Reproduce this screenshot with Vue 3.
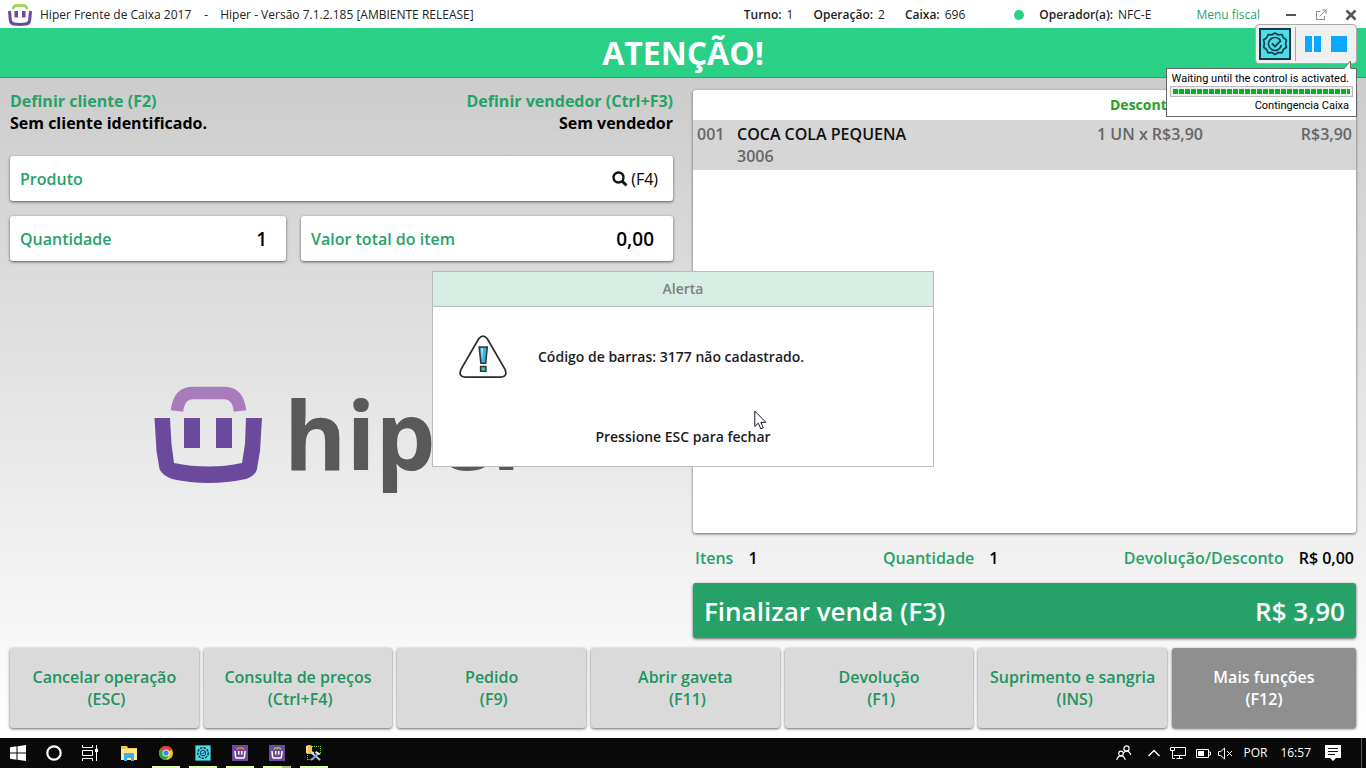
<script setup>
import { ref } from 'vue'

const quantity = ref('1')
const itemTotal = ref('0,00')
const product = ref('')

const status = [
  { label: 'Turno:', value: '1' },
  { label: 'Operação:', value: '2' },
  { label: 'Caixa:', value: '696' },
]

const items = [
  { seq: '001', name: 'COCA COLA PEQUENA', code: '3006', amount: '1 UN x R$3,90', total: 'R$3,90' },
]

const totals = [
  { label: 'Itens', value: '1' },
  { label: 'Quantidade', value: '1' },
  { label: 'Devolução/Desconto', value: 'R$ 0,00' },
]

const actions = [
  { name: 'Cancelar operação', key: '\u00a0(ESC)' },
  { name: 'Consulta de preços', key: '\u00a0(Ctrl+F4)' },
  { name: 'Pedido', key: '\u00a0(F9)' },
  { name: 'Abrir gaveta', key: '\u00a0(F11)' },
  { name: 'Devolução', key: '\u00a0(F1)' },
  { name: 'Suprimento e sangria', key: '\u00a0(INS)' },
  { name: 'Mais funções', key: '(F12)', dark: true },
]
</script>

<template>
  <div class="screen">
    <header class="titlebar">
      <svg class="brand" width="24" height="22" viewBox="0 0 24 22" aria-hidden="true">
        <path d="M5 5 Q5.500 1.500 9 1.500 H15 Q18.500 1.500 19 5" fill="none" stroke="#a4d65e" stroke-width="3" />
        <path d="M1.500 7 L2.300 16 Q2.600 19.500 6 20 Q12 20.800 18 20 Q21.400 19.500 21.700 16 L22.500 7" fill="none" stroke="#6b4a9e" stroke-width="3" />
        <path d="M6.500 7h3.500v6.500h-3.500zM14 7h3.500v6.500h-3.500z" fill="#6b4a9e" />
      </svg>
      <span class="app-name">Hiper Frente de Caixa 2017</span>
      <span class="dash">-</span>
      <span class="version">Hiper - Versão 7.1.2.185 [AMBIENTE RELEASE]</span>
      <div class="status">
        <span v-for="s in status" :key="s.label"><b>{{ s.label }}</b>{{ s.value }}</span>
      </div>
      <i class="online"></i>
      <span class="operator"><b>Operador(a):</b>NFC-E</span>
      <a class="fiscal" href="#">Menu fiscal</a>
      <div class="win-buttons">
        <button aria-label="Minimizar"><svg width="12" height="12" viewBox="0 0 12 12"><path d="M1 6h10" stroke="#555" stroke-width="2" /></svg></button>
        <button aria-label="Restaurar"><svg width="12" height="12" viewBox="0 0 12 12"><path d="M5.500 2.500H1.500v8h8V7M4.500 7.500l6-6M7 1h4v4" fill="none" stroke="#888" /></svg></button>
        <button aria-label="Fechar"><svg width="12" height="12" viewBox="0 0 12 12"><path d="M1.500 1.500l9 9M10.500 1.500l-9 9" stroke="#555" stroke-width="2.500" /></svg></button>
      </div>
    </header>

    <h1 class="banner">ATENÇÃO!</h1>

    <main class="pos">
      <div class="columns">
        <section class="left">
          <div class="people">
            <div><a href="#">Definir cliente (F2)</a><strong>Sem cliente identificado.</strong></div>
            <div class="seller"><a href="#">Definir vendedor (Ctrl+F3)</a><strong>Sem vendedor</strong></div>
          </div>
          <div class="fields">
            <div class="field wide">
              <label for="product">Produto</label>
              <input id="product" v-model="product" type="text" />
              <button class="search">
                <svg width="16" height="16" viewBox="0 0 16 16" aria-hidden="true"><circle cx="6.500" cy="6.500" r="5" fill="none" stroke="#111" stroke-width="2.400" /><path d="M10 10l4.500 4.500" stroke="#111" stroke-width="3" /></svg>
                (F4)
              </button>
            </div>
            <div class="field">
              <label for="quantity">Quantidade</label>
              <input id="quantity" v-model="quantity" type="text" />
            </div>
            <div class="field">
              <label for="item-total">Valor total do item</label>
              <input id="item-total" v-model="itemTotal" type="text" />
            </div>
          </div>
          <div class="logo">
            <svg width="440" height="110" viewBox="0 0 440 110" role="img" aria-label="hiper">
              <path d="M23 25 Q25 7 39 7 H70 Q84 7 86 25" fill="none" stroke="#a97bbd" stroke-width="12.500" />
              <path d="M0.500 32 H16 L17.500 58 L20 77 Q55 84 88 77 L91 58 L92 32 H108 L106 65 L103 83 Q102 89 92 93 Q54 101 18 93 Q8 89 5.500 83 L2.500 65 Z" fill="#6b4a9e" />
              <path d="M30 32h16v30h-16zM62 32h16v30h-16z" fill="#6b4a9e" />
              <text class="wordmark" x="130" y="84">hiper</text>
            </svg>
          </div>
        </section>

        <section class="right">
          <div class="list">
            <table>
              <colgroup><col class="c-seq" /><col /><col class="c-amount" /><col class="c-total" /></colgroup>
              <thead>
                <tr><th></th><th></th><th class="discount">Desconto</th><th></th></tr>
              </thead>
              <tbody>
                <tr v-for="item in items" :key="item.seq">
                  <td>{{ item.seq }}</td>
                  <td><span class="item-name">{{ item.name }}</span><br />{{ item.code }}</td>
                  <td class="num">{{ item.amount }}</td>
                  <td class="num">{{ item.total }}</td>
                </tr>
              </tbody>
            </table>
          </div>
          <div class="totals">
            <div v-for="t in totals" :key="t.label"><span>{{ t.label }}</span><b>{{ t.value }}</b></div>
          </div>
          <button class="finish"><span>Finalizar venda (F3)</span><span>R$ 3,90</span></button>
        </section>
      </div>

      <nav class="actions">
        <button v-for="a in actions" :key="a.name" :class="{ dark: a.dark }">{{ a.name }}<br />{{ a.key }}</button>
      </nav>
    </main>

    <footer class="taskbar">
      <button class="sys" aria-label="Iniciar"><svg width="16" height="16" viewBox="0 0 16 16"><path d="M0 2.300L6.500 1.300V7.500H0zM7.500 1.200L16 0V7.500H7.500zM0 8.500H6.500V14.700L0 13.700zM7.500 8.500H16V16L7.500 14.800z" fill="#fff" /></svg></button>
      <button class="sys" aria-label="Pesquisar"><svg width="16" height="16" viewBox="0 0 16 16"><circle cx="8" cy="8" r="6.700" fill="none" stroke="#fff" stroke-width="2.200" /></svg></button>
      <button class="sys task-view" aria-label="Visão de tarefas"><svg width="16" height="16" viewBox="0 0 16 16"><path d="M.5 0v2.500h10V0M.5 16v-2.500h10V16M.5 5.500h10v5h-10zM14.500 0v16" fill="none" stroke="#fff" /><path d="M13 4h3v3h-3z" fill="#fff" /></svg></button>
      <button class="app" aria-label="Explorador"><svg width="16" height="16" viewBox="0 0 16 16"><path d="M0 1h6l1 2h9v12H0z" fill="#f5c843" /><path d="M0 4h16v11H0z" fill="#ffe793" /><path d="M3 16V9q0-1 1-1h8q1 0 1 1v7h-3v-3H6v3z" fill="#39b1e8" /></svg></button>
      <button class="app open" aria-label="Chrome"><svg width="16" height="16" viewBox="0 0 16 16"><circle cx="8" cy="8" r="7" fill="#fbc116" /><path d="M8 8L1.900 4.500A7 7 0 0 1 14.100 4.500z" fill="#e2412f" /><path d="M8 8L1.900 4.500A7 7 0 0 0 8 15L10.500 11z" fill="#2da34c" /><path d="M8 4.500h6.100" stroke="#e2412f" /><circle cx="8" cy="8" r="3.500" fill="#fff" /><circle cx="8" cy="8" r="2.700" fill="#4285f4" /></svg></button>
      <button class="app open" aria-label="Contingência"><svg width="16" height="16" viewBox="0 0 32 32"><path d="M0 0h32v32H0z" fill="#123a4c" /><path d="M1 1h30v30H1z" fill="#4bdde8" /><circle cx="16" cy="16" r="10.500" fill="none" stroke="#123a4c" stroke-width="3" stroke-dasharray="5 2" /><circle cx="16" cy="16" r="5.500" fill="none" stroke="#123a4c" stroke-width="2" /><path d="M13 16l2 2 5-5" fill="none" stroke="#123a4c" stroke-width="2" /></svg></button>
      <button v-for="color in ['#f08030', '#8bd05a']" :key="color" class="app open" :class="{ grouped: color === '#8bd05a' }" aria-label="Hiper"><svg width="16" height="16" viewBox="0 0 16 16"><path d="M0 0h16v16H0z" fill="#6b4a9e" /><path d="M5 4.500Q5.500 3 7 3h3q1.500 0 2 1.500" fill="none" stroke-width="1.500" :stroke="color" /><path d="M3 6l.5 5.500Q3.500 13 5 13h6q1.500 0 1.500-1.500L13 6" fill="none" stroke="#fff" stroke-width="1.500" /><path d="M6 6h1.500v3.500H6zM9 6h1.500v3.500H9z" fill="#fff" /></svg></button>
      <button class="app open" aria-label="Ferramentas"><svg width="16" height="16" viewBox="0 0 16 16"><path d="M1.500 15V1.500h13V9M1.500 14.500H8" fill="none" stroke="#7fdd3a" stroke-dasharray="1 1" /><path d="M0 1q3-2 6 0v7q-3 2-6 0z" fill="#f2c54b" /><path d="M1 1v7" stroke="#fff2b0" /><path d="M6 8l8 7" stroke="#b8c4ca" stroke-width="2" /><path d="M12 9l-7 6" stroke="#8ba8be" stroke-width="2" /><path d="M10 6l5 3-2 1-4-2z" fill="#e7edf0" /><path d="M5 6l3 1v3l-3-1z" fill="#d2d8dc" /></svg></button>
      <div class="tray">
        <button class="t-people" aria-label="Pessoas"><svg width="16" height="16" viewBox="0 0 16 16" fill="none" stroke="#fff" stroke-width="1.200"><circle cx="10.500" cy="3.500" r="2.600" /><path d="M7.500 8q3-3.500 5.500-1 1.500 1.500 1.700 3" /><circle cx="5" cy="8.500" r="2.300" /><path d="M.8 15q.7-4.200 4.200-4.200T9.200 15" /></svg></button>
        <button class="t-chevron" aria-label="Ícones ocultos"><svg width="14" height="8" viewBox="0 0 14 8"><path d="M1.500 7L7 1.500 12.500 7" fill="none" stroke="#fff" stroke-width="1.400" /></svg></button>
        <button class="t-net" aria-label="Rede"><svg width="16" height="14" viewBox="0 0 16 14" fill="none" stroke="#fff"><path d="M5 1.500h10.500v8H4M9.500 9.500v3M6.500 12.500h6M.5 1.500h4v3h-4zM2.500 4.500v8H5" /></svg></button>
        <button class="t-bat" aria-label="Bateria"><svg width="15" height="9" viewBox="0 0 15 9"><path d="M.5.5h12v8H.5zM13 3h1.500v3H13" fill="none" stroke="#fff" /><path d="M2 2h6v5H2z" fill="#fff" /></svg></button>
        <button class="t-vol" aria-label="Volume"><svg width="15" height="13" viewBox="0 0 15 13"><path d="M.5 4.500h2.300L6.500 1v11L2.800 8.500H.5zM9 4l5 5M14 4L9 9" fill="none" stroke="#fff" /></svg></button>
        <span class="t-lang">POR</span>
        <time class="t-clock">16:57</time>
        <button class="t-notes" aria-label="Notificações"><svg width="16" height="16" viewBox="0 0 16 16"><path d="M0 0h16v13h-5l-3 3-3-3H0z" fill="#fff" /><path d="M3 3.500h10M3 6.500h10M3 9.500h7" stroke="#111" /></svg></button>
      </div>
    </footer>

    <section class="alert" role="dialog" aria-labelledby="alert-title">
      <h2 id="alert-title">Alerta</h2>
      <div class="alert-body">
        <svg width="48" height="44" viewBox="0 0 50 46" aria-hidden="true">
          <path d="M20.500 4Q25-1.500 29.500 4L48 36Q51 43.500 44 44H6Q-1 43.500 2 36z" fill="#fff" stroke="#2b2b2b" stroke-width="1.800" />
          <path d="M21 12.500h8.500l-1.700 17h-5z" fill="#31b7e8" stroke="#333" stroke-width="1.600" />
          <path d="M23 14h2l-1 13z" fill="#b8ecff" />
          <path d="M22.500 33h5.500v5h-5.500z" fill="#35d08a" stroke="#333" stroke-width="1.600" />
        </svg>
        <p>Código de barras: 3177 não cadastrado.</p>
      </div>
      <p class="hint">Pressione ESC para fechar</p>
      <svg class="cursor" width="13" height="20" viewBox="0 0 13 20" aria-hidden="true"><path d="M.8 1v15.500l3.500-3.300 2.500 5.600 2.500-1.100-2.500-5.400h5z" fill="#fff" stroke="#111827" /></svg>
    </section>

    <aside class="robot">
      <div class="robot-bar">
        <svg width="32" height="32" viewBox="0 0 32 32" aria-hidden="true">
          <path d="M1 1h30v30H1z" fill="#4bdde8" stroke="#123a4c" stroke-width="2" />
          <path d="M16 5l3.200 1.800 3.700-.3 1.500 3.300 3 2.200-.8 3.700.8 3.600-3 2.200-1.500 3.300-3.700-.3L16 26.500l-3.200-2-3.700.3-1.500-3.300-3-2.200.8-3.600-.8-3.700 3-2.200 1.500-3.300 3.700.3z" fill="none" stroke="#123a4c" stroke-width="1.700" stroke-linejoin="round" />
          <path d="M21.500 12.500A6.500 6.500 0 1 0 22.400 17" fill="none" stroke="#123a4c" stroke-width="1.600" />
          <path d="M13 15.500l3 3 6-6" fill="none" stroke="#123a4c" stroke-width="1.800" />
        </svg>
        <i class="sep"></i>
        <button aria-label="Pausar"><svg width="16" height="16" viewBox="0 0 16 16"><path d="M0 0h7v16H0zM9 0h7v16H9z" fill="#0aa8ff" /></svg></button>
        <button aria-label="Parar"><svg width="16" height="16" viewBox="0 0 16 16"><path d="M0 0h16v16H0z" fill="#0aa8ff" /></svg></button>
      </div>
      <div class="robot-tip">
        <svg class="tail" width="8" height="9" viewBox="0 0 8 9" aria-hidden="true"><path d="M0 8.500L6.500 1V9" fill="#fff" stroke="#666" /><path d="M1 8.500h5.500" stroke="#fff" /></svg>
        <p>Waiting until the control is activated.</p>
        <div class="progress"><i></i></div>
        <p>Contingencia Caixa</p>
      </div>
    </aside>
  </div>
</template>

<style>
body { margin: 0; }
</style>

<style scoped>
.screen {
  position: relative;
  display: flex;
  flex-direction: column;
  min-height: 100vh;
  font-family: "Open Sans", "Noto Sans", sans-serif;
  font-size: 16px;
  line-height: 22px;
  color: #000;
}
* { box-sizing: border-box; }
button, input { font: inherit; color: inherit; border: 0; padding: 0; background: none; }
a { color: inherit; text-decoration: none; }
p, h1, h2 { margin: 0; }
b, strong { font-weight: 600; }
svg { display: block; }

.titlebar {
  display: flex;
  align-items: center;
  height: 28px;
  padding: 1px 9px 0 8px;
  background: #fff;
  font-size: 12px;
  white-space: nowrap;
  color: #222;
}
.app-name { margin-left: 8px; }
.dash { margin: 0 12px 0 13px; }
.status { display: flex; gap: 20px; margin-left: auto; }
.titlebar b { margin-right: 5px; }
.online { width: 10px; height: 10px; margin: 0 15px 0 49px; border-radius: 50%; background: #29d085; }
.fiscal { margin-left: 45px; color: #26a269; }
.win-buttons { display: flex; gap: 18px; margin-left: 25px; }

.banner {
  height: 50px;
  border-bottom: 1px solid #26a269;
  background: #29d085;
  color: #fff;
  font-size: 32px;
  font-weight: 700;
  line-height: 50px;
  text-align: center;
}

.pos {
  flex: 1;
  display: flex;
  flex-direction: column;
  gap: 10px;
  padding: 12px 10px 10px;
  background: linear-gradient(#ccc, #fff);
}
.columns { flex: 1; display: grid; grid-template-columns: repeat(2, minmax(0, 1fr)); gap: 20px; }
.left, .right { display: flex; flex-direction: column; }

.people { display: flex; justify-content: space-between; margin-bottom: 22px; }
.people a, .people strong { display: block; font-weight: 700; }
.people a { color: #26a269; }
.seller { text-align: right; }

.fields { display: grid; grid-template-columns: minmax(0, 276fr) minmax(0, 372fr); gap: 15px; }
.field {
  display: flex;
  align-items: center;
  height: 45px;
  padding: 0 19px 0 10px;
  border-radius: 3px;
  background: #fff;
  box-shadow: 0 1px 3px rgba(0, 0, 0, 0.6);
}
.wide { grid-column: 1 / -1; padding-right: 15px; }
.field label { white-space: nowrap; font-weight: 600; color: #26a269; }
.field input { flex: 1; min-width: 0; text-align: right; font-size: 19px; font-weight: 600; outline: 0; }
.search { display: flex; align-items: center; gap: 3px; }

.logo { margin: 125px 0 0 144px; }
.wordmark { font: 700 95px "Open Sans", sans-serif; fill: #595959; }

.list {
  flex: 1;
  border-radius: 3px;
  overflow: hidden;
  background: #fff;
  box-shadow: 0 1px 3px rgba(0, 0, 0, 0.6);
}
table { width: 100%; table-layout: fixed; border-collapse: collapse; }
.c-seq { width: 40px; }
.c-amount { width: 114px; }
.c-total { width: 149px; }
th { height: 30px; padding: 0; }
.discount { padding-left: 17px; text-align: left; font-size: 14px; font-weight: 700; color: #28a028; }
td { padding: 3px 4px; vertical-align: top; font-weight: 600; color: #666; background: #d6d6d6; white-space: nowrap; }
.item-name { color: #111; }
.num { text-align: right; }

.totals { display: flex; align-items: center; justify-content: space-between; height: 50px; padding: 0 2px; }
.totals span { margin-right: 15px; font-weight: 600; color: #26a269; }

.finish {
  display: flex;
  align-items: center;
  justify-content: space-between;
  height: 55px;
  padding: 0 11px;
  border-radius: 3px;
  background: #26a269;
  box-shadow: 0 1px 3px rgba(0, 0, 0, 0.6);
  color: #fff;
  font-size: 26px;
  font-weight: 600;
}

.actions { display: grid; grid-template-columns: repeat(6, 1fr) 184px; gap: 5px; }
.actions button {
  height: 80px;
  border-radius: 3px;
  background: #dadada;
  box-shadow: 0 1px 3px rgba(0, 0, 0, 0.6);
  color: #219460;
  font-weight: 600;
}
.actions .dark { background: #8f8f8f; color: #fff; }

.taskbar { display: flex; height: 30px; background: #090909; color: #fff; font-size: 12px; }
.taskbar button { display: flex; align-items: center; justify-content: center; }
.taskbar .sys { width: 36px; }
.task-view { margin-right: 2px; }
.taskbar .app { width: 37px; }
.open { background: linear-gradient(#e0ffa8, #e0ffa8) center bottom / 28px 2px no-repeat; }
.grouped { background: linear-gradient(90deg, #e0ffa8 19px, #afc188 19px) center bottom / 28px 2px no-repeat; }
.tray { display: flex; align-items: center; margin: 0 4px 0 auto; padding-right: 20px; border-right: 1px solid #555; }
.t-chevron { margin-left: 15px; }
.t-net { margin-left: 9px; }
.t-bat { margin-left: 10px; }
.t-vol { margin-left: 7px; }
.t-lang { margin-left: 10px; }
.t-clock { margin-left: 13px; }
.t-notes { margin-left: 14px; padding-left: 4px; }
.tray .t-notes { margin-left: 14px; padding-left: 0; }

.alert {
  position: absolute;
  top: 271px;
  left: 50%;
  width: 502px;
  height: 196px;
  margin-left: -251px;
  border: 1px solid #bbb;
  background: #fff;
  color: #1c1c1c;
  font-size: 14px;
  font-weight: 600;
}
.alert h2 {
  height: 35px;
  border-bottom: 1px solid #bbb;
  background: #d7eee4;
  color: #7f7f7f;
  font-size: 14px;
  font-weight: 600;
  line-height: 34px;
  text-align: center;
}
.alert-body { display: flex; align-items: center; gap: 31px; height: 100px; padding-left: 26px; }
.hint { margin-top: 19px; text-align: center; }
.cursor { position: absolute; left: 321px; top: 138px; }

.robot { position: absolute; top: 24px; right: 9px; }
.robot-bar {
  display: flex;
  align-items: center;
  gap: 10px;
  width: 102px;
  height: 40px;
  margin-left: auto;
  padding-left: 3px;
  border: 1px solid #aaa;
  border-radius: 4px;
  background: #f0f0f0;
}
.sep { width: 1px; height: 34px; margin: 0 -1px 0 -6px; background: #aaa; }
.robot-tip {
  position: relative;
  width: 191px;
  height: 49px;
  margin-top: 4px;
  padding: 3px 7px 0 3px;
  border: 1px solid #666;
  background: #fff;
  font: 11px/14px Roboto, sans-serif;
  text-align: right;
  white-space: nowrap;
}
.tail { position: absolute; right: 4px; top: -9px; }
.progress { height: 11px; margin: 0 -4px 2px 0; padding: 2px; border: 1px solid #bbb; background: #eee; }
.progress i { display: block; height: 5px; background: repeating-linear-gradient(90deg, #06b025 0 5px, #eee 5px 6px); }
</style>
